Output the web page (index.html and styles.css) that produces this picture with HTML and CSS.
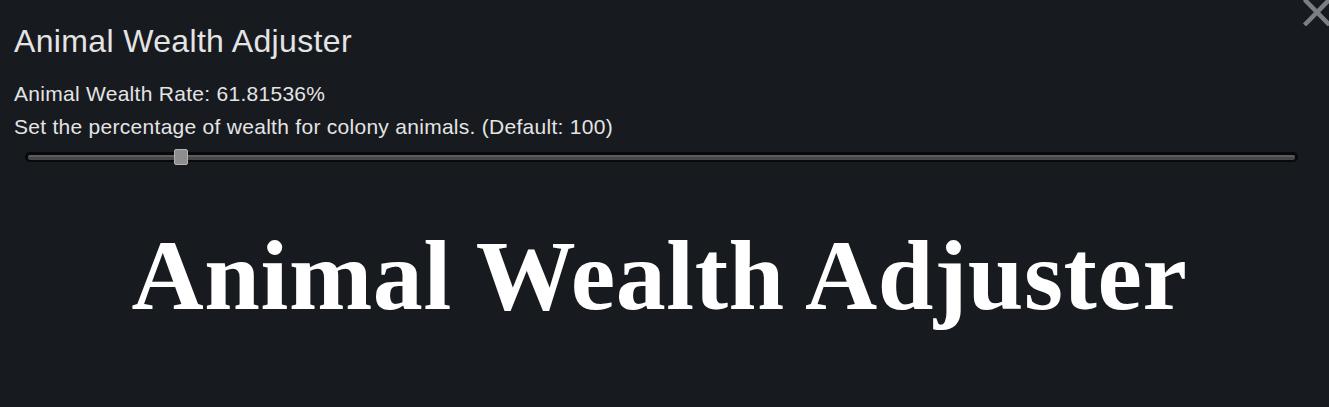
FILE: index.html
```html
<!DOCTYPE html>
<html>
<head>
    <meta charset="UTF-8">
    <title>Animal Wealth Adjuster</title>
    <link rel="stylesheet" href="styles.css">
</head>
<body>
<div class="window">
    <button class="close" aria-label="Close">
        <svg width="30" height="26" viewBox="0 0 30 26">
            <path d="M4.5 -0.5 L29.5 25 M29.5 -0.5 L4.5 25" stroke="#7b7e82" stroke-width="4.5" fill="none"/>
        </svg>
    </button>
    <div class="settings">
        <h1>Animal Wealth Adjuster</h1>
        <div class="label">Animal Wealth Rate: 61.81536%</div>
        <div class="label">Set the percentage of wealth for colony animals. (Default: 100)</div>
        <div class="slider">
            <div class="track"></div>
            <div class="thumb" style="left: 12.25%"></div>
        </div>
    </div>
    <div class="banner">Animal Wealth Adjuster</div>
</div>
</body>
</html>
```

FILE: styles.css
```css
body {
    margin: 0;
    width: 1329px;
    height: 407px;
    overflow: hidden;
    background: #171a1f;
}

.window {
    position: relative;
    height: 100%;
    font-family: 'Liberation Sans', Arial, sans-serif;
    color: #e4e4e4;
}

.close {
    position: absolute;
    top: 0;
    right: -1px;
    padding: 0;
    border: none;
    background: none;
}

.close svg {
    display: block;
}

.settings {
    padding: 22px 14px 0 14px;
}

h1 {
    margin: 0 0 21px;
    font-weight: 400;
    font-size: 32px;
    line-height: 38px;
    letter-spacing: 0.35px;
}

.label {
    font-size: 21px;
    line-height: 26px;
    letter-spacing: 0.28px;
    margin-bottom: 7px;
}

.slider {
    position: relative;
    margin: 9px 17px 0 11px;
    height: 16px;
}

/* dark groove with a lighter bar inside */
.track {
    position: absolute;
    left: 0;
    right: 0;
    top: 3px;
    height: 10px;
    border-radius: 5px;
    background: #08090a;
}

.track::after {
    content: '';
    position: absolute;
    left: 3px;
    right: 3px;
    top: 3px;
    height: 5px;
    border-radius: 2px;
    background: linear-gradient(#5c5c5c 0 45%, #474747 45%);
}

.thumb {
    position: absolute;
    top: 0;
    width: 14px;
    height: 16px;
    margin-left: -7px;
    box-sizing: border-box;
    border: 1px solid #b3b3b3;
    border-radius: 2px;
    background: #8e8e8e;
}

.banner {
    margin-top: 51px;
    padding-right: 10px;
    text-align: center;
    font-family: 'Liberation Serif', 'Times New Roman', serif;
    font-weight: 700;
    font-size: 100px;
    line-height: 120px;
    letter-spacing: 0.6px;
    color: #ffffff;
}
```
